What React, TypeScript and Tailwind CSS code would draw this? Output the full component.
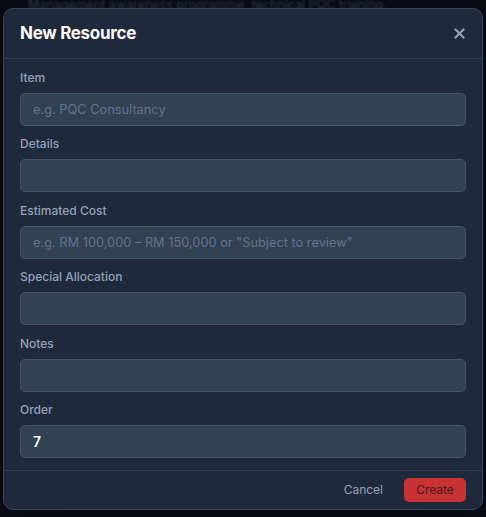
import React from "react";

const fields: { label: string; placeholder?: string; value?: string }[] = [
  { label: "Item", placeholder: "e.g. PQC Consultancy" },
  { label: "Details" },
  { label: "Estimated Cost", placeholder: 'e.g. RM 100,000 – RM 150,000 or "Subject to review"' },
  { label: "Special Allocation" },
  { label: "Notes" },
  { label: "Order", value: "7" },
];

export default function App() {
  return (
    <div
      className="relative w-[486px] h-[517px] overflow-hidden bg-[#090c13]"
      style={{ fontFamily: "Inter, 'Noto Sans', sans-serif" }}
    >
      <div className="absolute left-[28px] top-0 text-[12.5px] leading-[9px] text-[#353b46] blur-[1.2px] whitespace-nowrap">
        Management awareness programme, technical PQC training.
      </div>
      <div className="relative ml-[3px] mt-[8px] w-[480px] h-[502px] rounded-[10px] border border-[#3a4659] bg-[#1e293b] flex flex-col shadow-2xl">
        <div className="h-[50px] shrink-0 flex items-center justify-between pl-[16px] pr-[17px] border-b border-[#344154]">
          <h2 className="text-[17px] font-bold text-white tracking-[-0.3px]">New Resource</h2>
          <button className="text-[#94a3b8] flex items-center justify-center w-[12px] h-[12px]">
            <svg width="11" height="11" viewBox="0 0 11 11" fill="none" stroke="currentColor" strokeWidth="2.2" strokeLinecap="round">
              <path d="M1.5 1.5 L9.5 9.5 M9.5 1.5 L1.5 9.5" />
            </svg>
          </button>
        </div>
        <div className="flex flex-col gap-[10.4px] px-[16px] pt-[11px] pb-[12px]">
          {fields.map((f) => (
            <div key={f.label} className="flex flex-col">
              <label className="text-[12px] leading-[16px] font-medium text-[#94a3b8] mb-[7px]">{f.label}</label>
              <div className="h-[33px] rounded-[5px] border border-[#46546a] bg-[#334155] flex items-center px-[12px]">
                {f.value ? (
                  <span className="text-[14px] font-semibold text-white">{f.value}</span>
                ) : (
                  <span className="text-[12.8px] text-[#64748b] whitespace-nowrap">{f.placeholder ?? ""}</span>
                )}
              </div>
            </div>
          ))}
        </div>
        <div className="flex-1 border-t border-[#344154] flex items-center justify-end gap-[21px] pr-[16px]">
          <button className="text-[12px] font-normal text-[#94a3b8]">Cancel</button>
          <button className="w-[62px] h-[24px] rounded-[5px] bg-[#c93232] text-[12px] font-normal text-[#4a1820]">
            Create
          </button>
        </div>
      </div>
    </div>
  );
}
